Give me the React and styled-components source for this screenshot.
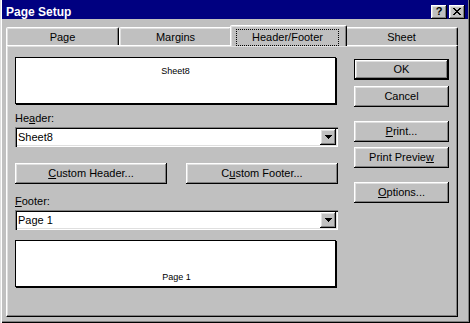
import styled, { createGlobalStyle } from "styled-components";

const GlobalStyle = createGlobalStyle`
  html, body {
    margin: 0;
    padding: 0;
    background: #c0c0c0;
  }
  body {
    font-family: "Liberation Sans", Arial, sans-serif;
    font-size: 11px;
    color: #000;
  }
`;

const raised = `
  box-shadow: inset -1px -1px #000, inset 1px 1px #fff,
    inset -2px -2px #808080, inset 2px 2px #dfdfdf;
`;

const Window = styled.div`
  width: 470px;
  height: 323px;
  box-sizing: border-box;
  padding: 0 2px 2px 2px;
  background: #c0c0c0;
  box-shadow: inset 1px 0 #dfdfdf, inset 2px 0 #fff, inset -1px -1px #000,
    inset -2px -2px #808080;
  display: flex;
  flex-direction: column;
`;

const TitleBar = styled.div`
  height: 19px;
  box-sizing: border-box;
  padding: 4px 3px 0 4px;
  background: #000080;
  color: #fff;
  display: flex;
  align-items: center;
  justify-content: space-between;
`;

const Title = styled.span`
  font-weight: bold;
  font-size: 12px;
  line-height: 14px;
`;

const TitleButtons = styled.div`
  display: flex;
  gap: 2px;
`;

const TitleButton = styled.div`
  width: 16px;
  height: 14px;
  background: #c0c0c0;
  color: #000;
  display: flex;
  align-items: center;
  justify-content: center;
  font-weight: bold;
  font-size: 11px;
  line-height: 11px;
  ${raised}
`;

const Body = styled.div`
  flex: 1;
  display: flex;
  flex-direction: column;
  padding: 6px 10px 4px 4px;
`;

const TabRow = styled.div`
  height: 20px;
  display: flex;
  align-items: flex-end;
`;

const Tab = styled.div`
  position: relative;
  box-sizing: border-box;
  width: ${(p) => (p.$active ? 117 : 113)}px;
  height: ${(p) => (p.$active ? 21 : 18)}px;
  margin: ${(p) => (p.$active ? "0 -2px -1px -2px" : "0")};
  z-index: ${(p) => (p.$active ? 1 : 0)};
  padding-top: ${(p) => (p.$active ? 3 : 3)}px;
  border-style: solid;
  border-width: 1px 1px 0 1px;
  border-color: #fff #000 transparent #fff;
  border-radius: 2px 2px 0 0;
  box-shadow: inset -1px 0 #808080, inset 1px 1px #dfdfdf;
  background: #c0c0c0;
  display: flex;
  justify-content: center;
  align-items: flex-start;
  line-height: 13px;
`;

const FocusRing = styled.span`
  border: 1px dotted #000;
  padding: 1px 15px 1px;
  margin-left: -2px;
`;

const Panel = styled.div`
  flex: 1;
  box-sizing: border-box;
  border: 1px solid;
  border-color: #fff #000 #000 #fff;
  box-shadow: inset -1px -1px #808080, inset 1px 1px #dfdfdf;
  padding: 11px 0 0 8px;
  display: flex;
  gap: 16px;
`;

const LeftColumn = styled.div`
  width: 323px;
  display: flex;
  flex-direction: column;
`;

const Preview = styled.div`
  width: 321px;
  height: 47px;
  box-sizing: border-box;
  border: 1px solid #000;
  box-shadow: 1px 1px 0 #000;
  background: #fff;
  margin-top: ${(p) => p.$top || 0}px;
  display: flex;
  justify-content: center;
  align-items: ${(p) => (p.$bottom ? "flex-end" : "flex-start")};
  padding: ${(p) => (p.$bottom ? "0 0 3px 2px" : "8px 0 0 0")};
  font-size: 9px;
  line-height: 11px;
`;

const Label = styled.div`
  margin-top: ${(p) => p.$top}px;
  line-height: 13px;
`;

const Combo = styled.div`
  margin-top: 2px;
  height: 20px;
  box-sizing: border-box;
  background: #fff;
  box-shadow: inset 1px 1px #808080, inset 2px 2px #000, inset -1px -1px #fff,
    inset -2px -2px #dfdfdf;
  padding: 2px 2px 2px 3px;
  display: flex;
  align-items: center;
  justify-content: space-between;
  line-height: 13px;
`;

const DropButton = styled.div`
  width: 16px;
  height: 16px;
  background: #c0c0c0;
  display: flex;
  align-items: center;
  justify-content: center;
  ${raised}
`;

const ButtonRow = styled.div`
  margin-top: 16px;
  display: flex;
  justify-content: space-between;
`;

const Button = styled.div`
  width: ${(p) => p.$width || 95}px;
  height: 21px;
  box-sizing: border-box;
  margin-top: ${(p) => p.$top || 0}px;
  background: #c0c0c0;
  display: flex;
  align-items: center;
  justify-content: center;
  line-height: 13px;
  ${(p) => (p.$default ? "border: 1px solid #000;" : "")}
  ${raised}
`;

const RightColumn = styled.div`
  width: 95px;
  margin-top: 2px;
  display: flex;
  flex-direction: column;
`;

function CloseGlyph() {
  return (
    <svg width="8" height="7" viewBox="0 0 8 7" shapeRendering="crispEdges">
      <path
        d="M0 0h2v1h1v1h2V1h1V0h2v1H7v1H6v1H5v1h1v1h1v1h1v1H6V6H5V5H3v1H2v1H0V6h1V5h1V4h1V3H2V2H1V1H0z"
        fill="#000"
      />
    </svg>
  );
}

function ArrowGlyph() {
  return (
    <svg width="7" height="4" viewBox="0 0 7 4" shapeRendering="crispEdges">
      <path d="M0 0h7v1H6v1H5v1H4v1H3V3H2V2H1V1H0z" fill="#000" />
    </svg>
  );
}

function ComboBox({ value }) {
  return (
    <Combo>
      <span>{value}</span>
      <DropButton>
        <ArrowGlyph />
      </DropButton>
    </Combo>
  );
}

const tabs = ["Page", "Margins", "Header/Footer", "Sheet"];

export default function App() {
  return (
    <>
      <GlobalStyle />
      <Window>
        <TitleBar>
          <Title>Page Setup</Title>
          <TitleButtons>
            <TitleButton>?</TitleButton>
            <TitleButton>
              <CloseGlyph />
            </TitleButton>
          </TitleButtons>
        </TitleBar>
        <Body>
          <TabRow>
            {tabs.map((t) =>
              t === "Header/Footer" ? (
                <Tab key={t} $active>
                  <FocusRing>{t}</FocusRing>
                </Tab>
              ) : (
                <Tab key={t}>{t}</Tab>
              )
            )}
          </TabRow>
          <Panel>
            <LeftColumn>
              <Preview>Sheet8</Preview>
              <Label $top={8}>
                He<u>a</u>der:
              </Label>
              <ComboBox value="Sheet8" />
              <ButtonRow>
                <Button $width={152}>
                  <span>
                    <u>C</u>ustom Header...
                  </span>
                </Button>
                <Button $width={152}>
                  <span>
                    C<u>u</u>stom Footer...
                  </span>
                </Button>
              </ButtonRow>
              <Label $top={11}>
                <u>F</u>ooter:
              </Label>
              <ComboBox value="Page 1" />
              <Preview $top={10} $bottom>
                Page 1
              </Preview>
            </LeftColumn>
            <RightColumn>
              <Button $default>OK</Button>
              <Button $top={6}>Cancel</Button>
              <Button $top={14}>
                <span>
                  <u>P</u>rint...
                </span>
              </Button>
              <Button $top={5}>
                <span>
                  Print Previe<u>w</u>
                </span>
              </Button>
              <Button $top={14}>
                <span>
                  <u>O</u>ptions...
                </span>
              </Button>
            </RightColumn>
          </Panel>
        </Body>
      </Window>
    </>
  );
}
